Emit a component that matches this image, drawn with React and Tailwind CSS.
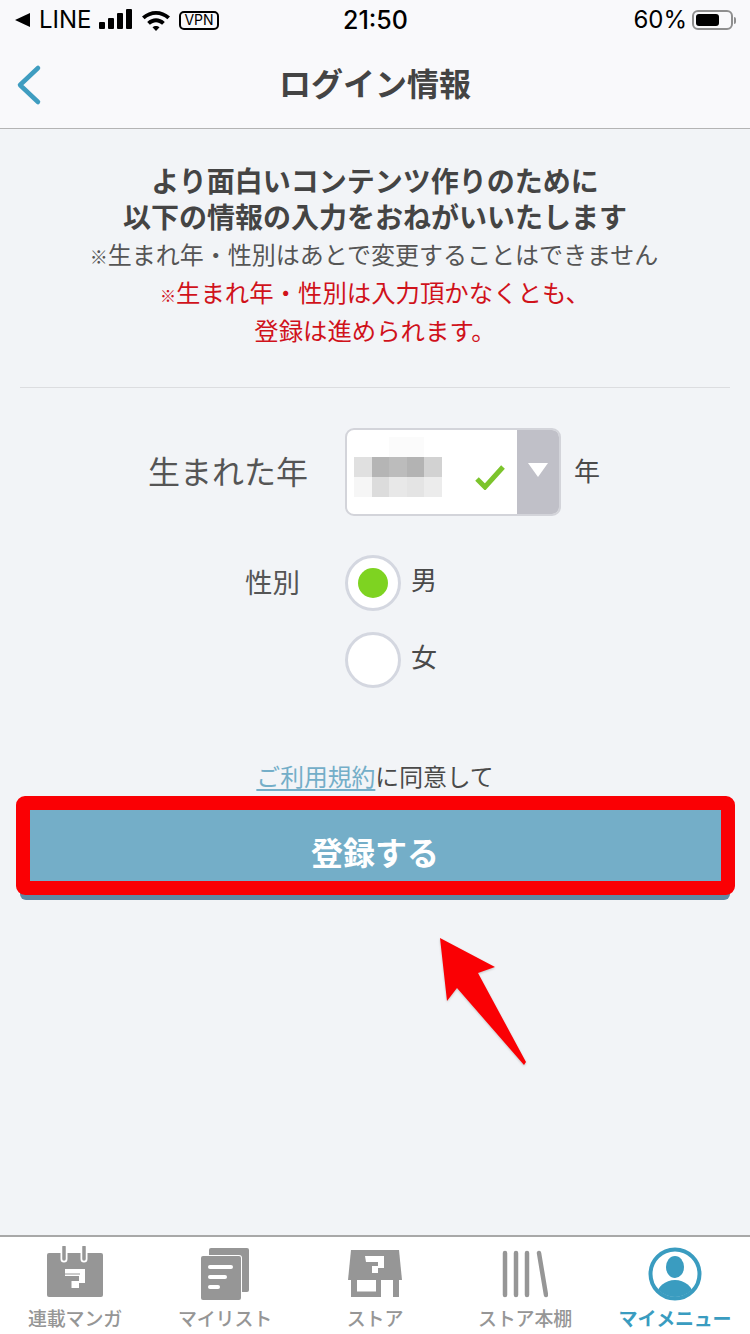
const jp = { fontFamily: '"Noto Sans CJK JP", sans-serif' };

const BLUR = [
  ['#ffffff', '#ffffff', '#fbfbfb', '#fbfbfb', '#ffffff'],
  ['#e0e0e0', '#b5b5b5', '#bcbcbc', '#b3b3b3', '#d2d2d2'],
  ['#f6f6f6', '#dcdcdc', '#e8e8e8', '#e4e4e4', '#ececec'],
];

function StatusBar() {
  return (
    <div className="relative flex h-[40px] items-center text-black" style={{ fontFamily: 'Inter, sans-serif' }}>
      <div className="flex flex-1 items-center pl-[14px]">
        <svg width="17" height="16" viewBox="0 0 17 16" className="mr-[8px]">
          <path d="M1 8 16 1v14z" fill="#000" />
        </svg>
        <span className="w-[52px] text-[24px] leading-none font-normal">LINE</span>
        <svg width="34" height="24" viewBox="0 0 34 24" className="ml-[8px]">
          <rect x="0" y="14" width="6" height="7" rx="1" fill="#000" />
          <rect x="9" y="10" width="6" height="11" rx="1" fill="#000" />
          <rect x="18" y="5" width="6" height="16" rx="1" fill="#000" />
          <rect x="27" y="1" width="6" height="20" rx="1" fill="#000" />
        </svg>
        <svg width="30" height="24" viewBox="0 0 30 24" className="ml-[8px]">
          <path d="M1 8.500C9 1 21 1 29 8.500l-2.600 2.800C19.800 5.200 10.200 5.200 3.600 11.300z" fill="#000" />
          <path d="M6.200 14C11.500 9 18.500 9 23.800 14l-2.700 2.800C17.300 13.400 12.700 13.400 8.900 16.800z" fill="#000" />
          <path d="M11.500 19.300C13.500 17.400 16.500 17.400 18.500 19.300L15 23z" fill="#000" />
        </svg>
        <span className="ml-[8px] flex h-[19px] w-[40px] items-center justify-center rounded-[5px] border-2 border-black text-[14px] leading-none">VPN</span>
      </div>
      <span className="absolute left-[343px] top-[8px] text-[25px] leading-[24px] font-medium">21:50</span>
      <div className="flex items-center pr-[14px]">
        <span className="text-[24px] leading-none">60%</span>
        <span className="ml-[5px] flex h-[20px] w-[41px] items-center rounded-[6px] border-2 border-[#8f8f8f] p-[2px]">
          <span className="h-full w-[23px] rounded-[3px] bg-black" />
        </span>
        <span className="ml-[1px] h-[7px] w-[2px] rounded-r bg-[#8f8f8f]" />
      </div>
    </div>
  );
}

function Header() {
  return (
    <header className="border-b border-[#b4b4b4] bg-[#f9f9fb]">
      <StatusBar />
      <div className="relative flex h-[88px] items-center justify-center">
        <svg width="26" height="44" viewBox="0 0 26 44" className="absolute left-[16px] top-[23px]">
          <path d="M22 5 4 22l18 17" fill="none" stroke="#3f9dc0" strokeWidth="4.500" strokeLinecap="round" strokeLinejoin="round" />
        </svg>
        <h1 className="mb-[4px] text-[32px] leading-[40px] font-bold text-[#444444]" style={jp}>ログイン情報</h1>
      </div>
    </header>
  );
}

function YearSelect() {
  return (
    <div className="flex h-[88px] w-[216px] overflow-hidden rounded-[9px] border-2 border-[#d3d4da] bg-white">
      <div className="relative flex-1">
        <div className="absolute left-[7px] top-[7px] grid grid-cols-5">
          {BLUR.flat().map((c, i) => (
            <div key={i} className="h-[20px] w-[17.600px]" style={{ backgroundColor: c }} />
          ))}
        </div>
        <svg width="32" height="26" viewBox="0 0 32 26" className="absolute left-[127px] top-[34px]">
          <path d="M3 15l8 8L29 3" fill="none" stroke="#7cc42c" strokeWidth="5" />
        </svg>
      </div>
      <div className="flex w-[42px] items-center justify-center bg-[#c0c0c8]">
        <svg width="20" height="14" viewBox="0 0 20 14" className="mb-[4px]">
          <path d="M0 0h20L10 14z" fill="#fff" />
        </svg>
      </div>
    </div>
  );
}

function Radio({ checked, label }) {
  return (
    <div className="flex items-center">
      <span className="flex h-[56px] w-[56px] items-center justify-center rounded-full border-[3px] border-[#d4d7e0] bg-white">
        {checked && <span className="h-[30px] w-[30px] rounded-full bg-[#7ed321]" />}
      </span>
      <span className="ml-[10px] mb-[8px] text-[26px] leading-[36px] text-[#4a4a4a]">{label}</span>
    </div>
  );
}

function CalendarIcon() {
  return (
    <svg width="56" height="54" viewBox="0 0 56 54" className="mt-[9px]">
      <rect x="0" y="7" width="56" height="44" rx="2" fill="#969696" />
      <path d="M17 2v11M37 2v11" stroke="#fff" strokeWidth="7" strokeLinecap="round" />
      <path d="M17 1v12M37 1v12" stroke="#969696" strokeWidth="3.500" strokeLinecap="round" />
      <path d="M18 23h20v14h-6v5h-7.500v-7H32v-5H18z" fill="#fff" />
      <path d="M18 28h15" stroke="#969696" strokeWidth="1" />
    </svg>
  );
}

function ListIcon() {
  return (
    <svg width="50" height="54" viewBox="0 0 50 54" className="mt-[11px] ml-[2px]">
      <rect x="8" y="0" width="40" height="44" rx="2" fill="#969696" />
      <rect x="-1" y="7" width="42" height="46" rx="3" fill="#fff" />
      <rect x="0" y="8" width="40" height="44" rx="2" fill="#969696" />
      <rect x="7" y="17" width="25" height="4" rx="2" fill="#fff" />
      <rect x="7" y="27" width="19" height="4" rx="2" fill="#fff" />
      <rect x="7" y="37" width="12" height="4" rx="2" fill="#fff" />
    </svg>
  );
}

function StoreIcon() {
  return (
    <svg width="54" height="50" viewBox="0 0 54 50" className="mt-[13px]">
      <path d="M3 0H51L54 30H0z" fill="#969696" />
      <path d="M17 6h19v12h-6v5h-6v-7h6v-4H18z" fill="#fff" />
      <path d="M3 30h6v17H3zM28 30h5v17h-5zM45 30h6v17h-6zM3 41.500h30V47H3z" fill="#969696" />
    </svg>
  );
}

function ShelfIcon() {
  return (
    <svg width="46" height="50" viewBox="0 0 46 50" className="mt-[13px]">
      <path d="M3 3v42M14 3v42M25 3v42M37 3l7 42" stroke="#969696" strokeWidth="4.500" strokeLinecap="round" fill="none" />
    </svg>
  );
}

function MyIcon() {
  return (
    <svg width="54" height="54" viewBox="0 0 54 54" className="mt-[10px]">
      <defs>
        <clipPath id="my-clip">
          <circle cx="27" cy="27" r="23" />
        </clipPath>
      </defs>
      <circle cx="27" cy="27" r="24.500" fill="#fff" stroke="#3a9cc0" strokeWidth="4" />
      <ellipse cx="27" cy="20" rx="9" ry="11" fill="#3a9cc0" />
      <ellipse cx="27" cy="48" rx="18" ry="15" fill="#3a9cc0" clipPath="url(#my-clip)" />
    </svg>
  );
}

function NavItem({ icon, label, active }) {
  return (
    <div className="flex w-[150px] flex-col items-center">
      <div className="flex h-[64px] w-full items-start justify-center">{icon}</div>
      <span className={`mt-[5px] text-[19px] leading-[24px] tracking-[-0.200px] ${active ? 'font-bold text-[#3a9cc0]' : 'font-medium text-[#969696]'}`}>{label}</span>
    </div>
  );
}

export default function App() {
  return (
    <div className="relative flex h-[1334px] w-[750px] flex-col overflow-hidden bg-[#f2f4f7]" style={jp}>
      <Header />
      <main className="flex-1">
        <div className="pt-[33px] text-center">
          <p className="text-[28px] leading-[36px] font-bold text-[#444444]">
            より面白いコンテンツ作りのために<br />以下の情報の入力をおねがいいたします
          </p>
          <p className="mt-[1px] pr-[2px] text-[24px] leading-[38px] text-[#555555]">
            <span className="text-[18px] leading-none">※</span>生まれ年・性別はあとで変更することはできません
          </p>
          <p className="text-[24.400px] leading-[38px] text-[#d0121b]">
            <span className="text-[16px] leading-none">※</span>生まれ年・性別は入力頂かなくとも、
          </p>
          <p className="text-[24.400px] leading-[38px] text-[#d0121b]">登録は進められます。</p>
        </div>
        <hr className="mx-[20px] mt-[38px] border-t border-[#dcdde0]" />
        <div className="mt-[40px] flex items-center">
          <label className="mb-[5px] w-[308px] text-right text-[32px] leading-[44px] text-[#555555]">生まれた年</label>
          <div className="ml-[37px]"><YearSelect /></div>
          <span className="mb-[4px] ml-[13px] text-[26px] leading-[36px] text-[#4a4a4a]">年</span>
        </div>
        <div className="mt-[39px] flex items-start">
          <label className="w-[300px] pt-[6px] text-right text-[27.500px] leading-[40px] text-[#555555]">性別</label>
          <div className="ml-[45px] flex flex-col gap-[21px]">
            <Radio checked label="男" />
            <Radio label="女" />
          </div>
        </div>
        <p className="mt-[73px] text-center text-[23.800px] leading-[30px] text-[#4a4a4a]">
          <span className="text-[#74aec8] underline underline-offset-[3px]">ご利用規約</span>に同意して
        </p>
        <div className="relative mx-[20px] mt-[9px]">
          <button className="flex h-[95px] w-full items-center justify-center rounded-[6px] bg-[#74aec8] pt-[7px] text-[32px] leading-[40px] font-bold text-white shadow-[0_5px_0_#5d8aa5]">登録する</button>
          <div className="absolute -top-[4px] -right-[5px] bottom-0 -left-[4px] rounded-[9px] border-[14px] border-[#fa0004]" />
        </div>
      </main>
      <svg width="120" height="140" viewBox="0 0 120 140" className="absolute left-[430px] top-[930px]" style={{ filter: 'drop-shadow(0 1px 1px rgba(0,0,0,0.2))' }}>
        <path d="M10 8 65 37 48 43 96 132 94 135 27 58 17 71z" fill="#fa0004" />
      </svg>
      <nav className="flex h-[99px] border-t-2 border-[#a8a8a8] bg-white">
        <NavItem icon={<CalendarIcon />} label="連載マンガ" />
        <NavItem icon={<ListIcon />} label="マイリスト" />
        <NavItem icon={<StoreIcon />} label="ストア" />
        <NavItem icon={<ShelfIcon />} label="ストア本棚" />
        <NavItem icon={<MyIcon />} label="マイメニュー" active />
      </nav>
    </div>
  );
}
